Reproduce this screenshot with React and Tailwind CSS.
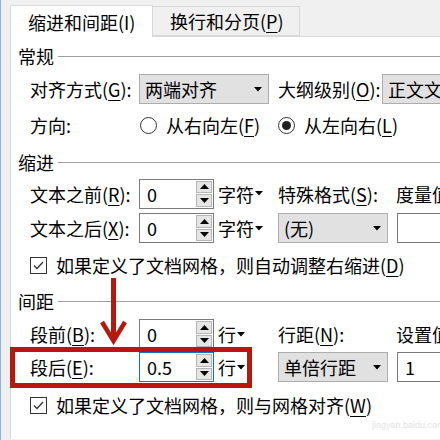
import React from 'react'

const U = ({ children }) => <span className="underline underline-offset-[3px] decoration-1">{children}</span>

const Caret = () => (
  <svg width="8" height="5" viewBox="0 0 8 5" className="inline-block shrink-0">
    <path d="M0 0 H8 L4 4.5 Z" fill="#000" />
  </svg>
)

const Section = ({ title, className = '' }) => (
  <div className={`flex items-center h-[24px] ${className}`}>
    <span className="pr-[4px]">{title}</span>
    <div className="flex-1 h-px bg-[#a0a0a0]" />
  </div>
)

const Select = ({ value, width, className = '' }) => (
  <div className={`flex shrink-0 items-center justify-between h-[30px] bg-[#e1e1e1] border border-[#adadad] pl-[5px] pr-[6px] ${width} ${className}`}>
    <span className="whitespace-nowrap">{value}</span>
    <Caret />
  </div>
)

const Spin = ({ value, active }) => (
  <div className={`flex shrink-0 items-stretch w-[75px] h-[30px] border ${active ? 'border-[#0078d7]' : 'border-[#7a7a7a]'} bg-white`}>
    <span className="flex-1 pl-[7px] flex items-center">{value}</span>
    <div className="flex flex-col w-[17px] py-[1px] pr-[1px] gap-px">
      <div className="flex-1 flex items-center justify-center bg-[#e5e5e5] border border-[#b5b5b5]">
        <svg width="9" height="5" viewBox="0 0 9 5"><path d="M0 5 H9 L4.5 0 Z" fill="#000" /></svg>
      </div>
      <div className="flex-1 flex items-center justify-center bg-[#e5e5e5] border border-[#b5b5b5]">
        <svg width="9" height="5" viewBox="0 0 9 5"><path d="M0 0 H9 L4.5 5 Z" fill="#000" /></svg>
      </div>
    </div>
  </div>
)

const Unit = ({ text }) => (
  <div className="flex items-center gap-[1px] ml-[4px] whitespace-nowrap">
    <span>{text}</span>
    <Caret />
  </div>
)

const Check = ({ children, className = '' }) => (
  <div className={`flex items-center h-[24px] pl-[12px] ${className}`}>
    <div className="w-[17px] h-[17px] shrink-0 border border-[#333] flex items-center justify-center bg-white">
      <svg width="11" height="9" viewBox="0 0 11 9">
        <path d="M1 4.5 L4 7.5 L10 1" fill="none" stroke="#333" strokeWidth="1.3" />
      </svg>
    </div>
    <span className="ml-[9px] whitespace-nowrap">{children}</span>
  </div>
)

const Radio = ({ checked, children }) => (
  <div className="flex items-center">
    <div className="w-[17px] h-[17px] shrink-0 rounded-full border border-[#333] flex items-center justify-center bg-white">
      {checked && <div className="w-[9px] h-[9px] rounded-full bg-[#222]" />}
    </div>
    <span className="ml-[9px] whitespace-nowrap">{children}</span>
  </div>
)

const Label = ({ w = 'w-[109px]', children }) => (
  <span className={`${w} shrink-0 whitespace-nowrap`}>{children}</span>
)

export default function App() {
  return (
    <div
      className="relative w-[440px] h-[440px] overflow-hidden bg-[#f0f0f0] text-[18px] leading-none text-black"
      style={{ fontFamily: '"Noto Sans CJK SC", "Noto Sans", sans-serif' }}
    >
      <div className="absolute left-0 top-0 bottom-0 w-px bg-[#8fb4dc]" />

      <div className="flex h-[37px] pl-[10px] pt-[5px]">
        <div className="flex shrink-0 items-center h-[32px] w-[143px] pl-[17px] bg-white border border-b-0 border-[#d9d9d9] relative z-10 whitespace-nowrap">
          缩进和间距(I)
        </div>
        <div className="flex shrink-0 items-center h-[30px] w-[147px] mt-px pl-[17px] border border-l-0 border-[#d9d9d9] bg-[#f0f0f0] whitespace-nowrap">
          换行和分页(<U>P</U>)
        </div>
      </div>

      <div className="ml-[10px] h-[403px] bg-white border-l border-t border-[#d9d9d9] -mt-px pl-[7px]">
        <Section title="常规" className="mt-[7px]" />

        <div className="flex items-center h-[30px] mt-[6px] pl-[12px]">
          <Label>对齐方式(<U>G</U>):</Label>
          <Select value="两端对齐" width="w-[130px]" />
          <Label w="ml-[9px] w-[104px]">大纲级别(<U>O</U>):</Label>
          <Select value="正文文本" width="w-[90px]" />
        </div>

        <div className="flex items-center h-[26px] mt-[8px] pl-[12px]">
          <Label w="w-[110px]">方向:</Label>
          <div className="w-[138px] shrink-0">
            <Radio>从右向左(<U>F</U>)</Radio>
          </div>
          <Radio checked>从左向右(<U>L</U>)</Radio>
        </div>

        <Section title="缩进" className="mt-[12px]" />

        <div className="flex items-center h-[31px] mt-[4px] pl-[12px]">
          <Label>文本之前(<U>R</U>):</Label>
          <Spin value="0" />
          <div className="w-[64px] shrink-0"><Unit text="字符" /></div>
          <Label w="w-[118px]">特殊格式(<U>S</U>):</Label>
          <Label w="">度量值(<U>Y</U>):</Label>
        </div>

        <div className="flex items-center h-[30px] mt-[4px] pl-[12px]">
          <Label>文本之后(<U>X</U>):</Label>
          <Spin value="0" />
          <div className="w-[64px] shrink-0"><Unit text="字符" /></div>
          <Select value="(无)" width="w-[110px]" />
          <div className="ml-[9px] w-[60px] h-[30px] border border-[#7a7a7a] shrink-0" />
        </div>

        <Check className="mt-[10px]">如果定义了文档网格，则自动调整右缩进(<U>D</U>)</Check>

        <Section title="间距" className="mt-[12px]" />

        <div className="flex items-center h-[30px] mt-[6px] pl-[12px]">
          <Label>段前(<U>B</U>):</Label>
          <Spin value="0" />
          <div className="w-[64px] shrink-0"><Unit text="行" /></div>
          <Label w="w-[118px]">行距(<U>N</U>):</Label>
          <Label w="">设置值(<U>A</U>):</Label>
        </div>

        <div className="flex items-center h-[30px] mt-[3px] pl-[12px]">
          <Label>段后(<U>E</U>):</Label>
          <Spin value="0.5" active />
          <div className="w-[64px] shrink-0"><Unit text="行" /></div>
          <Select value="单倍行距" width="w-[110px]" />
          <div className="ml-[9px] w-[60px] h-[30px] border border-[#7a7a7a] shrink-0 flex items-center pl-[7px]">1</div>
        </div>

        <Check className="mt-[11px]">如果定义了文档网格，则与网格对齐(<U>W</U>)</Check>
      </div>

      <div className="absolute left-[10px] top-[347px] w-[242px] h-[41px] border-[5px] border-[#b8170d]" />

      <svg className="absolute left-0 top-0" width="440" height="440" viewBox="0 0 440 440">
        <path d="M113.5 278 V338" stroke="#b8170d" strokeWidth="5" />
        <path d="M102 322 L113.5 341 L125 322" fill="none" stroke="#b8170d" strokeWidth="4.5" strokeLinejoin="miter" />
      </svg>

      <div className="absolute left-[372px] top-[421px] text-[9px] text-[#e2e2e2]" style={{ fontFamily: '"Liberation Sans", sans-serif' }}>
        jingyan.baidu.com
      </div>
    </div>
  )
}
